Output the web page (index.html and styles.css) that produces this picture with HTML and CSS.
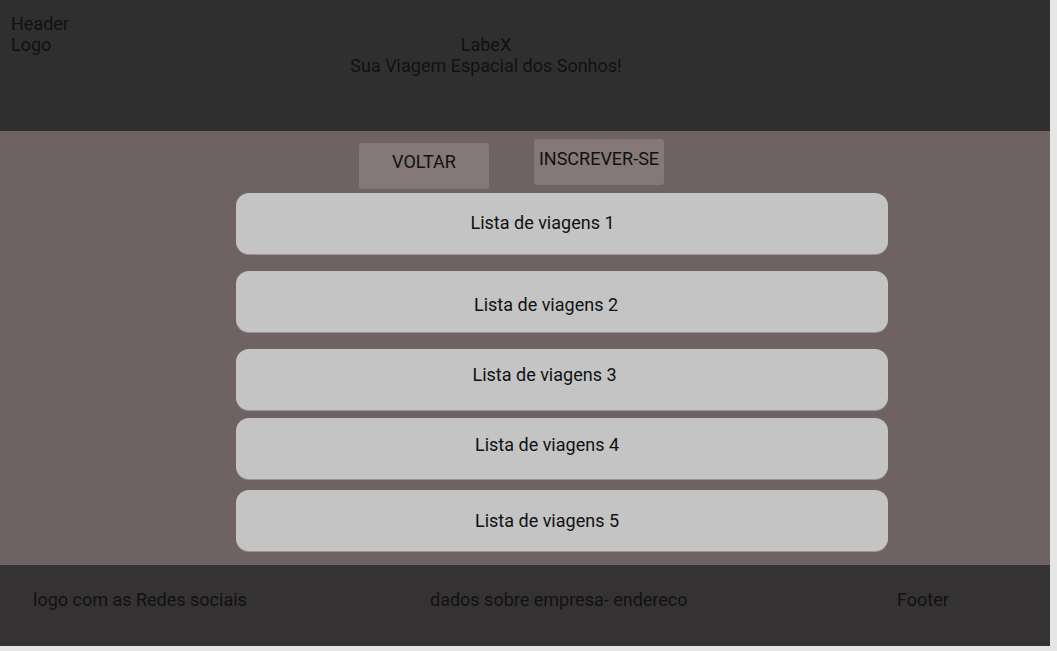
FILE: index.html
```html
<!DOCTYPE html>
<html lang="pt">
<head>
<meta charset="utf-8">
<title>LabeX</title>
<link rel="stylesheet" href="styles.css">
</head>
<body>
<div class="page">
  <header class="header">
    <div class="header-left">
      <div>Header</div>
      <div>Logo</div>
    </div>
    <div class="header-title">
      <div>LabeX</div>
      <div>Sua Viagem Espacial dos Sonhos!</div>
    </div>
  </header>
  <main class="main">
    <div class="actions">
      <button class="btn btn-back">VOLTAR</button>
      <button class="btn btn-sub">INSCREVER-SE</button>
    </div>
    <ul class="trips">
      <li class="trip trip-1">Lista de viagens 1</li>
      <li class="trip trip-2">Lista de viagens 2</li>
      <li class="trip trip-3">Lista de viagens 3</li>
      <li class="trip trip-4">Lista de viagens 4</li>
      <li class="trip trip-5">Lista de viagens 5</li>
    </ul>
  </main>
  <footer class="footer">
    <div>logo com as Redes sociais</div>
    <div>dados sobre empresa- endereco</div>
    <div>Footer</div>
  </footer>
</div>
</body>
</html>
```
FILE: styles.css
```css
html, body {
  margin: 0;
  padding: 0;
}
body {
  background: #e6e6e6;
  font-family: Roboto, "Liberation Sans", Arial, sans-serif;
  font-size: 18px;
  color: #111;
}
.page {
  width: 1050px;
  height: 646px;
  display: flex;
  flex-direction: column;
}
.header {
  height: 131px;
  box-sizing: border-box;
  background: #2f2f2f;
  padding: 13px 11px 0;
  display: grid;
  grid-template-columns: 175px 600px;
  align-items: start;
  line-height: 21px;
}
.header-title {
  text-align: center;
  padding-top: 21px;
}
.main {
  height: 434px;
  background: #6f6262;
  display: flex;
  flex-direction: column;
  align-items: center;
}
.actions {
  display: flex;
  align-items: flex-start;
  gap: 45px;
  padding-top: 8px;
  padding-right: 27px;
}
.btn {
  width: 130px;
  height: 46px;
  border: none;
  border-radius: 3px;
  background: #857878;
  font-family: inherit;
  font-size: 18px;
  color: #111;
  padding: 0;
  line-height: 20px;
  display: flex;
  justify-content: center;
  align-items: flex-start;
}
.btn-back {
  margin-top: 4px;
  padding-top: 9px;
}
.btn-sub {
  padding-top: 10px;
}
.trips {
  list-style: none;
  margin: 4px 0 0 74px;
  padding: 0;
  width: 652px;
  display: flex;
  flex-direction: column;
}
.trip {
  height: 61px;
  box-sizing: border-box;
  background: #c4c4c4;
  border-radius: 13px;
  box-shadow: 0 1px 0 #9e9393;
  text-align: center;
  line-height: 20px;
}
.trip-1 { padding-top: 20px; padding-right: 39px; }
.trip-2 { margin-top: 17px; padding-top: 24px; padding-right: 32px; }
.trip-3 { margin-top: 17px; padding-top: 16px; padding-right: 35px; }
.trip-4 { margin-top: 8px; padding-top: 17px; padding-right: 30px; }
.trip-5 { margin-top: 11px; padding-top: 21px; padding-right: 30px; }
.footer {
  height: 81px;
  box-sizing: border-box;
  background: #353233;
  display: grid;
  grid-template-columns: 397px 467px auto;
  padding: 0 0 12px 33px;
  align-items: center;
  line-height: 20px;
}
```
